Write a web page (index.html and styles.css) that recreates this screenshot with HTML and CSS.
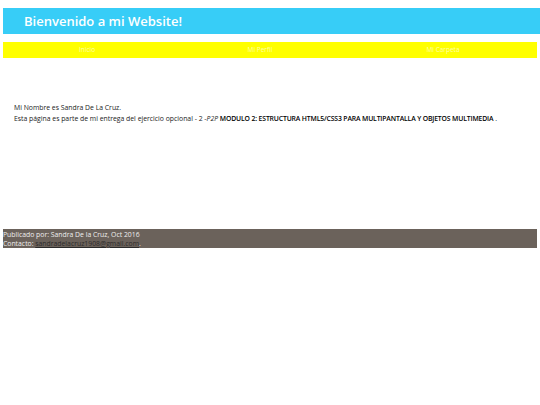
FILE: index.html
```html
<!DOCTYPE html>
<html lang="es">
<head>
<meta charset="utf-8">
<title>Mi Website</title>
<link rel="stylesheet" href="styles.css">
</head>
<body>
<header class="site-header">
  <h1 class="site-title">Bienvenido a mi Website!</h1>
</header>
<nav class="site-nav">
  <a class="nav-item" href="#">Inicio</a>
  <a class="nav-item" href="#">Mi Perfil</a>
  <a class="nav-item" href="#">Mi Carpeta</a>
</nav>
<main class="content">
  <p class="intro">Mi Nombre es Sandra De La Cruz.<br>Esta página es parte de mi entrega del ejercicio opcional - 2 -<em>P2P</em> <strong>MODULO 2: ESTRUCTURA HTML5/CSS3 PARA MULTIPANTALLA Y OBJETOS MULTIMEDIA</strong> .</p>
</main>
<footer class="site-footer">
  <p class="footer-text">Publicado por: Sandra De la Cruz, Oct 2016<br>Contacto: <a class="footer-link" href="#">sandradelacruz1908@gmail.com</a>.</p>
</footer>
</body>
</html>
```

FILE: styles.css
```css
html, body {
  margin: 0;
  padding: 0;
  background: #ffffff;
}
body {
  padding: 8px 3px 0 3px;
  font-family: "Open Sans", "DejaVu Sans", sans-serif;
}
.site-header {
  background: #37cdf7;
  height: 26px;
  display: flex;
  align-items: center;
  padding-left: 21px;
  margin-right: -3px;
}
.site-title {
  margin: 0;
  color: #ffffff;
  font-size: 13px;
  font-weight: 600;
  line-height: 1;
}
.site-nav {
  margin-top: 8px;
  background: #ffff00;
  height: 16px;
  display: grid;
  grid-template-columns: 168fr 178fr 188fr;
  align-items: center;
}
.nav-item {
  text-align: center;
  color: #ffffa8;
  font-size: 6.5px;
  text-decoration: none;
  line-height: 16px;
}
.content {
  padding: 45px 0 0 11px;
  height: 126px;
}
.intro {
  margin: 0;
  font-size: 6.85px;
  line-height: 10.5px;
  color: #222222;
}
.intro strong {
  color: #000000;
  font-weight: 600;
  letter-spacing: -0.15px;
}
.site-footer {
  background: #6b625b;
  height: 19px;
}
.footer-text {
  margin: 0;
  padding-top: 1px;
  font-size: 6.85px;
  line-height: 9px;
  color: #eeeeee;
}
.footer-link {
  color: #2b2b2b;
  text-decoration: underline;
}
```
